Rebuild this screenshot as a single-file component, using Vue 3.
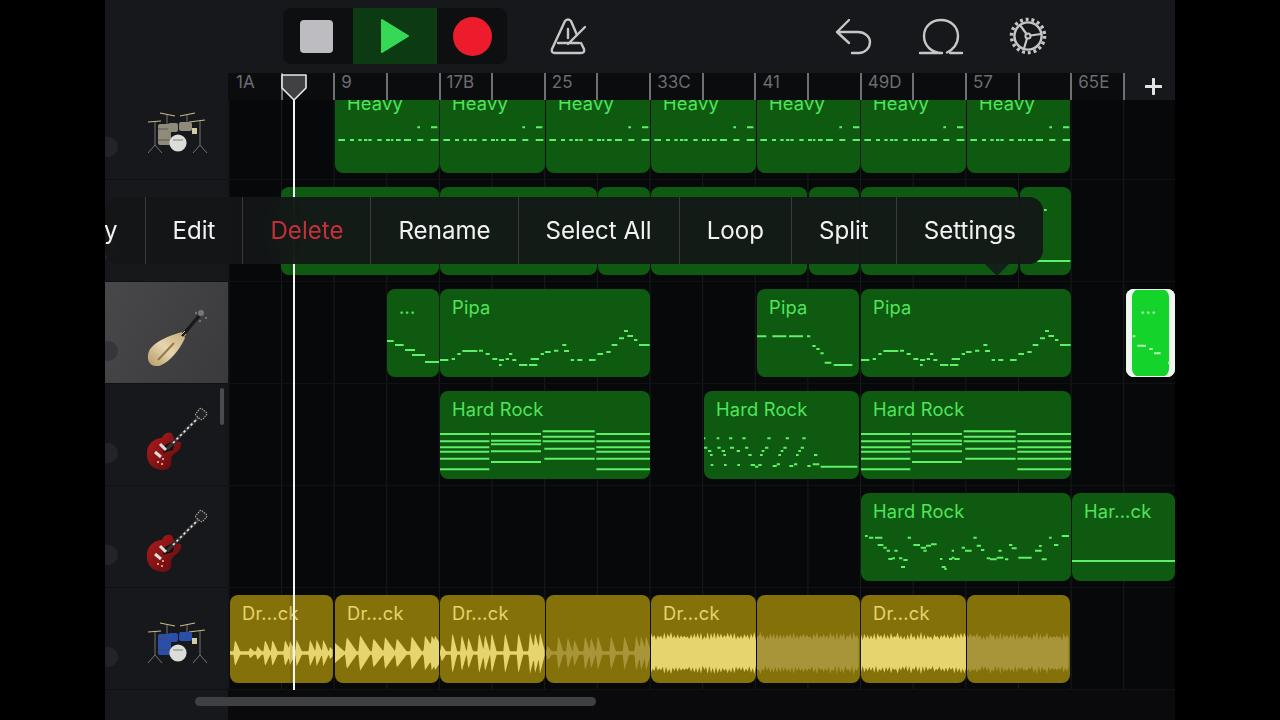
<template>
  <div class="app">
    <div class="screen">
      <header class="toolbar">
        <div class="transport">
          <button class="cell">
            <span class="stop"></span>
          </button>
          <button class="cell play">
            <svg width="30" height="36" viewBox="0 0 30 36"><path d="M2 2 L28 18 L2 34 Z" fill="#35d956" stroke="#35d956" stroke-width="2" stroke-linejoin="round" /></svg>
          </button>
          <button class="cell">
            <span class="rec"></span>
          </button>
        </div>

        <svg class="icon metronome" width="36" height="36" viewBox="0 0 36 36">
          <path d="M15 3 Q18 0 21 3 L27 17 M31 25 L34 31 Q35 35 31 35 H5 Q1 35 2 31 L15 3" />
          <path d="M8 25 H29 M18 26 L35 9 M18 11 V20" />
        </svg>

        <div class="spacer"></div>

        <svg class="icon undo" width="36" height="36" viewBox="0 0 36 36">
          <path d="M14 2 L2 14 L14 25 M2 14 H23 C30 14 35 19 35 24 C35 30 30 35 24 35 H17" />
        </svg>
        <svg class="icon loop" width="42" height="37" viewBox="0 0 42 37">
          <path d="M0 35 H22 C12 35 4 28 4 18 C4 9 11 2 21 2 C31 2 38 9 38 18 C38 26 33 32 27 34.5" />
          <path d="M30 35 H42" />
        </svg>
        <svg class="icon gear" width="38" height="38" viewBox="0 0 38 38">
          <circle class="teeth" cx="19" cy="19" r="16.6" />
          <circle cx="19" cy="19" r="13.6" stroke-width="2.4" />
          <circle cx="19" cy="19" r="2.6" stroke-width="2" />
          <path stroke-width="2.2" d="M17.5 17 L11 8 M21.5 18.5 L32 17 M18 21.5 L15 31.5" />
        </svg>
      </header>

      <div class="ruler-row">
        <div class="ruler-corner"></div>
        <div class="ruler">
          <div v-for="(label, i) in bars" :key="i" class="bar" :class="{ first: i === 0 }">{{ label }}</div>
        </div>
        <div class="add-track">
          <svg width="17" height="17" viewBox="0 0 17 17"><path d="M8.5 1 V16 M1 8.5 H16" stroke="#e2e2e2" stroke-width="3" stroke-linecap="round" /></svg>
        </div>
      </div>

      <div class="tracks">
        <div v-for="track in tracks" :key="track.id" class="track">
          <div class="track-head" :class="{ active: track.active }">
            <span class="knob"></span>

            <svg v-if="track.kind === 'drums'" class="instrument" viewBox="0 0 60 62">
              <g stroke="#7d7d7a" stroke-width="0.9" fill="none">
                <path d="M8 18 V42 L1 50 M8 42 L15 50 M53 18 V42 L46 50 M53 42 L60 50 M20 12 V22 M40 12 V20" />
              </g>
              <path d="M1 19 L14 18 M13 10 L28 13 M33 13 L48 10 M42 19 L58 17" stroke="#c8bb84" stroke-width="1.2" />
              <rect x="11" y="21" width="13" height="21" rx="2" :fill="track.shell" />
              <path d="M11 26 H24 M11 37 H24" stroke="#4c4a40" stroke-width="0.8" />
              <rect x="21" y="20" width="10" height="9" rx="2" :fill="track.shell" />
              <rect x="32" y="19" width="13" height="9" rx="2" :fill="track.shell" />
              <rect x="45" y="25" width="5" height="6" fill="#d2cba6" />
              <circle cx="31" cy="40" r="8.6" fill="#dcdcd8" />
              <path d="M26 37 H36" stroke="#77777a" stroke-width="0.9" />
            </svg>

            <svg v-else-if="track.kind === 'pipa'" class="instrument" viewBox="0 0 60 62">
              <defs>
                <linearGradient id="pipaBody" x1="0" y1="1" x2="1" y2="0">
                  <stop offset="0" stop-color="#b59a64" />
                  <stop offset="0.5" stop-color="#e6d6b0" />
                  <stop offset="1" stop-color="#c6ab78" />
                </linearGradient>
              </defs>
              <path d="M35 25 C27 27 7 34 2 44 C-1 52 2 59 9 59 C18 60 32 45 38 31 Z" fill="url(#pipaBody)" />
              <path d="M11 53 L27 36" stroke="#96784a" stroke-width="2" />
              <path d="M35 29 L52 9" stroke="#191919" stroke-width="3.4" />
              <path d="M32 30 L38 24 M34 33 L39 27" stroke="#c8b88c" stroke-width="1" />
              <circle cx="54" cy="6" r="3" fill="#77777a" />
              <circle cx="49" cy="6" r="0.8" fill="#b8b8b8" />
              <circle cx="59" cy="11" r="0.8" fill="#b8b8b8" />
              <circle cx="53" cy="14" r="0.8" fill="#b8b8b8" />
            </svg>

            <svg v-else-if="track.kind === 'guitar'" class="instrument" viewBox="0 0 60 62">
              <defs>
                <linearGradient :id="'sg' + track.id" x1="0" y1="0" x2="1" y2="1">
                  <stop offset="0" stop-color="#b01c1e" />
                  <stop offset="1" stop-color="#5e0a0c" />
                </linearGradient>
              </defs>
              <path d="M24 24 C19 23 16 26 15 29 C8 29 0 35 0 43 C-1 52 4 59 11 60 C17 62 23 61 24 55 C25 51 23 49 26 46 C29 43 33 42 34 36 C35 32 32 32 30 33 L28 35 C27 31 27 26 24 24 Z" :fill="'url(#sg' + track.id + ')'" />
              <path d="M18 36 L28 31 L26 41 L16 44 Z" fill="#111" />
              <path d="M20 40 L53 7" stroke="#333" stroke-width="3.6" />
              <path d="M26 34 L51 9" stroke="#e6e6e6" stroke-width="1.7" stroke-dasharray="2.4 2.6" />
              <path d="M13 35 L19 41 M8 43 L14 48" stroke="#dcdcdc" stroke-width="3" />
              <rect x="50" y="1" width="9" height="9" rx="1.5" transform="rotate(40 55 5)" fill="#222" stroke="#b5b5b5" stroke-width="1" stroke-dasharray="1.5 1" />
              <circle cx="11" cy="53" r="1" fill="#e5c9a0" />
              <circle cx="15" cy="55" r="1" fill="#e5c9a0" />
              <circle cx="16" cy="50" r="1" fill="#e5c9a0" />
            </svg>

            <span v-if="track.scroll" class="track-scroll"></span>
          </div>

          <div class="lane">
            <div
              v-for="(r, i) in track.regions"
              :key="i"
              class="region"
              :class="[track.tone, { selected: r.selected }]"
              :style="{ left: r.x - 228 + 'px', width: r.w + 'px' }"
            >
              <span v-if="r.name" class="region-name">{{ r.name }}</span>
              <svg class="region-art" :viewBox="`0 0 ${r.w * 3} 264`" preserveAspectRatio="none">
                <path v-if="r.notes" class="notes" :d="r.notes" />
                <path v-if="r.wave" class="wave" :class="{ dim: r.dim }" :d="r.wave" />
              </svg>
            </div>
          </div>
        </div>
      </div>

      <div class="footer">
        <div class="footer-head"></div>
        <div class="footer-lane"></div>
      </div>
      <span class="h-scroll"></span>

      <div class="playhead"></div>
      <svg class="playhead-cap" width="28" height="28" viewBox="0 0 28 28">
        <path d="M2 2 H26 V15 L14 27 L2 15 Z" fill="#414144" stroke="#e8e8e8" stroke-width="1.6" stroke-linejoin="round" />
      </svg>

      <div class="menu-wrap">
        <div class="menu">
          <div v-for="item in menuItems" :key="item" class="menu-item" :class="{ danger: item === 'Delete' }">{{ item }}</div>
        </div>
        <svg class="menu-tip" width="24" height="12" viewBox="0 0 24 12"><path d="M0 0 H24 L13 11 Q12 12 11 11 Z" fill="#14201a" /></svg>
      </div>
    </div>
  </div>
</template>

<script setup>
const menuItems = ['Copy', 'Edit', 'Delete', 'Rename', 'Select All', 'Loop', 'Split', 'Settings']

const bars = ['1A', '', '9', '', '17B', '', '25', '', '33C', '', '41', '', '49D', '', '57', '', '65E']

// note and wave coordinates are in thirds of a pixel, [start, end, y]
const notes = (list, ox, oy) => list.map(([a, b, y]) => `M${a - ox} ${y - oy}H${b - ox}`).join('')

const heavy = notes([
  [25, 45, 150], [60, 72, 150], [85, 95, 150], [102, 112, 150], [115, 125, 150], [142, 155, 150],
  [168, 180, 150], [183, 190, 150], [198, 212, 150], [222, 243, 150], [262, 280, 150], [302, 325, 150],
  [262, 270, 112], [303, 322, 112]
], 15, -15)

const pipaLong = notes([
  [333, 358, 540], [368, 378, 537], [385, 395, 522], [400, 445, 513], [450, 462, 512], [470, 482, 522],
  [490, 505, 537], [510, 525, 540], [510, 518, 555], [530, 540, 537], [540, 550, 522], [550, 562, 540],
  [570, 595, 555], [600, 625, 555], [605, 630, 537], [635, 645, 522], [648, 665, 516], [675, 688, 512],
  [700, 712, 495], [705, 720, 513], [725, 735, 540], [745, 760, 540], [780, 800, 540], [805, 822, 522],
  [832, 845, 516], [848, 865, 495], [870, 885, 475], [885, 897, 453], [895, 912, 468], [915, 925, 480],
  [930, 962, 495]
], 333, 327)

const pipaShort = notes([
  [22, 50, 469], [68, 110, 469], [118, 160, 469], [172, 182, 469], [188, 198, 498], [200, 210, 507],
  [212, 222, 520], [225, 245, 548], [252, 308, 555]
], 22, 327)

const pipaTiny = notes([[0, 20, 156], [24, 50, 168], [54, 84, 183], [75, 114, 198], [114, 156, 219]], 0, 0)

const pipaSelected = notes([[1148, 1156, 469], [1162, 1188, 497], [1198, 1208, 507], [1212, 1232, 520], [1254, 1262, 548]], 1128, 327)

const rockChords = notes([
  [30, 178, 147], [30, 178, 169], [30, 178, 187], [30, 178, 200], [30, 178, 221], [30, 178, 253],
  [183, 333, 147], [183, 333, 167], [183, 333, 178], [183, 333, 199], [183, 333, 231],
  [338, 494, 139], [338, 494, 155], [338, 494, 169], [343, 494, 191], [343, 494, 221],
  [499, 660, 147], [499, 660, 169], [499, 660, 187], [499, 660, 200], [499, 660, 221], [499, 660, 253]
], 30, 18)

const rockPicked = notes([
  [822, 826, 160], [860, 868, 160], [897, 907, 160], [937, 947, 160], [1012, 1022, 160], [1067, 1077, 160], [1117, 1127, 160],
  [822, 832, 188], [834, 844, 198], [840, 848, 210], [862, 872, 188], [875, 885, 198], [880, 888, 210], [900, 912, 188],
  [920, 930, 198], [945, 955, 188], [955, 965, 210], [1005, 1015, 188], [995, 1003, 198], [990, 998, 210],
  [1060, 1070, 188], [1052, 1060, 198], [1045, 1053, 210], [1112, 1122, 188], [1105, 1113, 198], [1098, 1106, 210], [1152, 1162, 210],
  [842, 850, 240], [882, 890, 240], [922, 930, 240], [962, 975, 240], [975, 985, 245], [985, 995, 240],
  [1028, 1040, 243], [1040, 1050, 238], [1078, 1090, 243], [1092, 1102, 238], [1132, 1142, 243], [1148, 1168, 238], [1172, 1282, 245]
], 822, 18)

const rockLead = notes([
  [30, 38, 138], [42, 55, 143], [60, 82, 143], [68, 85, 165], [85, 95, 173], [95, 105, 182], [118, 128, 182],
  [100, 112, 207], [112, 120, 205], [132, 142, 205], [145, 158, 210], [138, 150, 231], [158, 168, 143],
  [175, 195, 165], [197, 213, 173], [213, 228, 167], [228, 245, 163], [205, 215, 182], [255, 262, 207],
  [260, 272, 231], [268, 275, 237], [282, 292, 207], [290, 298, 203], [298, 314, 207], [290, 297, 182],
  [320, 330, 173], [330, 350, 182], [355, 365, 143], [365, 378, 167], [378, 388, 180], [395, 405, 205],
  [405, 425, 208], [425, 445, 203], [450, 460, 208], [430, 440, 182], [462, 472, 165], [470, 485, 175],
  [490, 530, 203], [540, 560, 182], [552, 560, 168], [560, 575, 208], [582, 590, 143], [597, 610, 165], [620, 642, 138]
], 18, 9)

const WAVE_Y = 174

const mirror = (amps, step) => {
  const top = amps.map((a, i) => `${i * step} ${WAVE_Y - a}`)
  const bottom = amps.map((a, i) => `${i * step} ${WAVE_Y + a}`).reverse()
  return 'M' + top.concat(bottom).join('L') + 'Z'
}

// drum hits: jumps up at the onset, then tapers away
const hits = (w, onsets, length) => {
  const amps = []
  for (let x = 0; x <= w * 3; x += 2) {
    let amp = 5
    for (const [at, h] of onsets) {
      const d = x - at
      if (d >= 0 && d < length) amp = Math.max(amp, h * (1 - d / length))
      if (d < 0 && d > -5) amp = Math.max(amp, h * (1 + d / 5))
    }
    amps.push(amp)
  }
  return mirror(amps, 2)
}

// loud part: solid body with a jagged edge
const loud = (w, seed) => {
  let s = seed
  const rnd = () => {
    s = (s * 9301 + 49297) % 233280
    return s / 233280
  }
  const amps = []
  for (let x = 0; x <= w * 3; x += 5) {
    amps.push(amps.length % 2 ? 38 + rnd() * 10 : 50 + rnd() * 14)
  }
  return mirror(amps, 5)
}

const hitsA = [[15, 40], [60, 16], [82, 20], [105, 40], [127, 40], [165, 40], [180, 36], [200, 40], [240, 40], [260, 40], [280, 40], [300, 18]]
const hitsB = [[0, 30], [35, 48], [75, 54], [115, 44], [150, 48], [185, 44], [230, 50], [270, 52], [290, 52], [300, 52]]
const hitsC = [[5, 26], [37, 62], [65, 56], [85, 48], [117, 62], [135, 56], [155, 62], [195, 62], [235, 62], [270, 62], [285, 62], [300, 62]]

const heavyRegions = [[335, 104], [440, 105], [546, 104], [651, 105], [757, 103], [861, 105], [967, 103]]

const tracks = [
  {
    id: 1, kind: 'drums', shell: '#8f8b7a', tone: 'green',
    regions: heavyRegions.map(([x, w]) => ({ x, w, name: 'Heavy', notes: heavy }))
  },
  {
    id: 2, kind: 'none', tone: 'green',
    regions: [
      { x: 281, w: 158 }, { x: 440, w: 157 }, { x: 598, w: 52 }, { x: 651, w: 156 }, { x: 809, w: 50 }, { x: 861, w: 157 },
      { x: 1020, w: 51, notes: notes([[50, 151, 222], [72, 80, 69]], 0, 0) }
    ]
  },
  {
    id: 3, kind: 'pipa', tone: 'green', active: true,
    regions: [
      { x: 387, w: 52, name: '...', notes: pipaTiny },
      { x: 440, w: 210, name: 'Pipa', notes: pipaLong },
      { x: 757, w: 102, name: 'Pipa', notes: pipaShort },
      { x: 861, w: 210, name: 'Pipa', notes: pipaLong },
      { x: 1126, w: 49, name: '...', notes: pipaSelected, selected: true }
    ]
  },
  {
    id: 4, kind: 'guitar', tone: 'green', scroll: true,
    regions: [
      { x: 440, w: 210, name: 'Hard Rock', notes: rockChords },
      { x: 704, w: 155, name: 'Hard Rock', notes: rockPicked },
      { x: 861, w: 210, name: 'Hard Rock', notes: rockChords }
    ]
  },
  {
    id: 5, kind: 'guitar', tone: 'green',
    regions: [
      { x: 861, w: 210, name: 'Hard Rock', notes: rockLead },
      { x: 1072, w: 103, name: 'Har...ck', notes: notes([[0, 309, 204]], 0, 0) }
    ]
  },
  {
    id: 6, kind: 'drums', shell: '#2a4fa8', tone: 'gold',
    regions: [
      { x: 230, w: 103, name: 'Dr...ck', wave: hits(103, hitsA, 18) },
      { x: 335, w: 104, name: 'Dr...ck', wave: hits(104, hitsB, 34) },
      { x: 440, w: 105, name: 'Dr...ck', wave: hits(105, hitsC, 16) },
      { x: 546, w: 104, wave: hits(104, hitsC.map(([a, h]) => [a, h * 0.85]), 16), dim: true },
      { x: 651, w: 105, name: 'Dr...ck', wave: loud(105, 11) },
      { x: 757, w: 103, wave: loud(103, 47), dim: true },
      { x: 861, w: 105, name: 'Dr...ck', wave: loud(105, 83) },
      { x: 967, w: 103, wave: loud(103, 29), dim: true }
    ]
  }
]
</script>

<style>
html,
body {
  background: #000;
}
</style>

<style scoped>
.app {
  display: flex;
  justify-content: center;
  width: 1280px;
  height: 720px;
  background: #000;
  font-family: Inter, "Liberation Sans", sans-serif;
}

.screen {
  position: relative;
  width: 1070px;
  height: 720px;
  overflow: hidden;
  background: #17181b;
}

.toolbar {
  display: flex;
  align-items: center;
  height: 73px;
  padding: 0 128px 1px 178px;
  box-sizing: border-box;
}

.transport {
  display: flex;
  height: 56px;
  border-radius: 8px;
  overflow: hidden;
  background: #0e0f11;
}

.cell {
  display: flex;
  align-items: center;
  justify-content: center;
  width: 70px;
  padding: 0;
  border: 0;
  background: transparent;
}

.cell.play {
  width: 84px;
  background: #0c3a12;
}

.stop {
  width: 33px;
  height: 33px;
  border-radius: 4px;
  margin-left: -3px;
  background: #bdbdc1;
}

.rec {
  width: 39px;
  height: 39px;
  border-radius: 50%;
  background: #ec1c2c;
}

.spacer {
  flex: 1;
}

.icon {
  fill: none;
  stroke: #c6c6c6;
  stroke-width: 2.4;
  stroke-linecap: round;
  stroke-linejoin: round;
  overflow: visible;
}

.teeth {
  stroke-width: 3.4;
  stroke-linecap: butt;
  stroke-dasharray: 2.9 2.9;
}

.metronome {
  margin-left: 43px;
}

.loop {
  margin-left: 49px;
}

.gear {
  margin-left: 47px;
}

.ruler-row {
  display: flex;
  height: 27px;
}

.ruler-corner {
  width: 123px;
}

.ruler {
  display: flex;
  width: 897px;
  overflow: hidden;
  background: #0b0c0e;
  border-right: 2px solid #6f7073;
  box-sizing: border-box;
}

.bar {
  flex: 0 0 52.65px;
  box-sizing: border-box;
  padding-left: 6px;
  border-left: 2px solid #6f7073;
  color: #6c6d70;
  font-size: 17px;
  line-height: 18px;
}

.bar.first {
  border-left-color: transparent;
}

.add-track {
  display: flex;
  flex: 1;
  justify-content: center;
  padding-top: 5px;
  padding-left: 6px;
}

.tracks {
  height: 590px;
  overflow: hidden;
}

.track {
  display: flex;
  height: 102px;
  box-sizing: border-box;
  border-bottom: 1px solid #101113;
}

.track:first-child {
  margin-top: -22px;
}

.track-head {
  position: relative;
  display: flex;
  flex: 0 0 123px;
  align-items: center;
  box-sizing: border-box;
  padding-top: 10px;
  background: #17181c;
}

.track-head.active {
  background: linear-gradient(120deg, #48484b, #3a3a3d);
}

.knob {
  flex: 0 0 20px;
  height: 20px;
  margin: 26px 29px 0 -7px;
  border-radius: 50%;
  background: #232428;
}

.active .knob {
  background: #36363a;
}

.instrument {
  flex: 0 0 60px;
  height: 62px;
  overflow: visible;
}

.track-scroll {
  position: absolute;
  top: 4px;
  right: 4px;
  width: 4px;
  height: 37px;
  border-radius: 2px;
  background: #4a4b4e;
}

.lane {
  position: relative;
  flex: 1;
  background-color: #07080a;
  background-image: linear-gradient(to right, #191a1c 1px, transparent 1px);
  background-position: 0.35px 0;
  background-size: 52.65px 100%;
}

.region {
  position: absolute;
  top: 7px;
  height: 88px;
  overflow: hidden;
  border-radius: 8px;
}

.region.green {
  background: #0e5a11;
  color: #50e55c;
  stroke: #5ff06a;
}

.region.gold {
  background: #85710a;
  color: #e6d46e;
}

.region.selected {
  background: #14d32a;
  color: #b8f5bc;
  stroke: #b8f5bc;
  box-shadow: inset 6px 0 #eef8ee, inset -6px 0 #eef8ee, inset 0 1px #eef8ee, inset 0 -1px #eef8ee;
}

.region-name {
  position: absolute;
  top: 7px;
  left: 12px;
  font-size: 18.3px;
  line-height: 22px;
  letter-spacing: 0.2px;
  white-space: nowrap;
}

.selected .region-name {
  left: 14px;
}

.region-art {
  position: absolute;
  inset: 0;
  width: 100%;
  height: 100%;
}

.notes {
  fill: none;
  stroke-width: 6;
}

.wave {
  fill: #e6d46e;
}

.wave.dim {
  fill: #a8953a;
}

.footer {
  display: flex;
  height: 30px;
}

.footer-head {
  flex: 0 0 123px;
  background: #17181c;
}

.footer-lane {
  flex: 1;
  background: #0a0a0c;
}

.h-scroll {
  position: absolute;
  top: 697px;
  left: 90px;
  width: 401px;
  height: 9px;
  border-radius: 5px;
  background: #3f4043;
}

.playhead {
  position: absolute;
  top: 100px;
  left: 188px;
  width: 2px;
  height: 590px;
  background: #f4f4f4;
  box-shadow: -3px 0 0 rgba(0, 0, 0, 0.1);
}

.playhead-cap {
  position: absolute;
  top: 73px;
  left: 175px;
}

.menu-wrap {
  position: absolute;
  top: 197px;
  left: 0;
  width: 938px;
  height: 67px;
}

.menu {
  display: flex;
  justify-content: flex-end;
  height: 100%;
  overflow: hidden;
  border-radius: 14px;
  background: rgba(20, 22, 23, 0.92);
  backdrop-filter: blur(18px);
}

.menu-item {
  flex: none;
  padding: 0 27px;
  border-left: 1px solid #3a3b3c;
  color: #f2f2f2;
  font-size: 24.1px;
  line-height: 67px;
  white-space: nowrap;
}

.menu-item.danger {
  color: #c4303a;
}

.menu-tip {
  position: absolute;
  top: 67px;
  left: 880px;
}
</style>
